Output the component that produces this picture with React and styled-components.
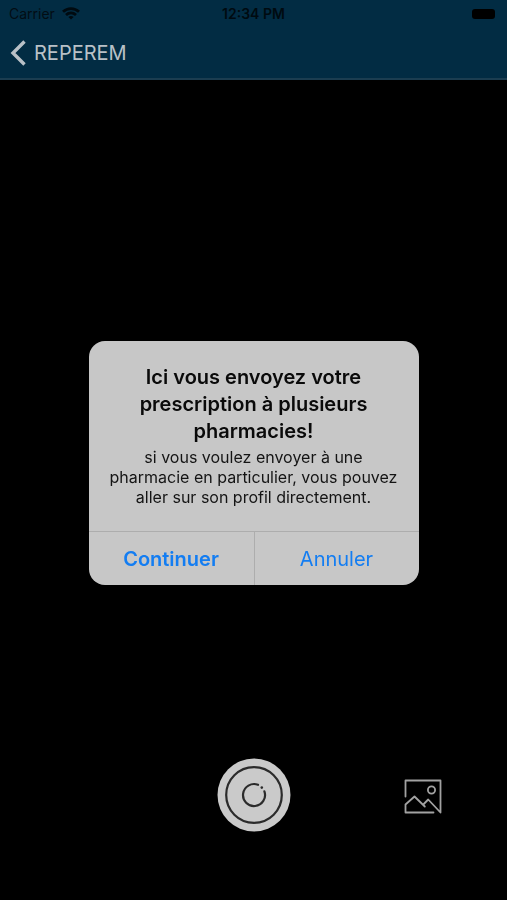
import React from "react";
import styled, { createGlobalStyle } from "styled-components";

const GlobalStyle = createGlobalStyle`
  * { box-sizing: border-box; }
  body {
    margin: 0;
    background: #000;
    font-family: Inter, "Liberation Sans", sans-serif;
  }
  button { font-family: inherit; border: 0; padding: 0; background: none; cursor: pointer; }
  svg { display: block; }
`;

const Screen = styled.div`
  min-height: 100vh;
  display: flex;
  flex-direction: column;
  background: #000;
`;

const Header = styled.header`
  background: #022c43;
  border-bottom: 2px solid #1b3d50;
`;

const StatusBar = styled.div`
  display: grid;
  grid-template-columns: 1fr auto 1fr;
  align-items: center;
  height: 27px;
  padding: 0 9px;
  color: #000a10;
  font-size: 14px;
`;

const Carrier = styled.span`
  display: flex;
  align-items: center;
  gap: 7px;
  color: #020d14;
`;

const Clock = styled.time`
  font-weight: 600;
`;

const Battery = styled.span`
  justify-self: end;
  width: 23px;
  height: 10px;
  margin-right: 3px;
  border-radius: 3px;
  background: #000;
`;

const NavBar = styled.nav`
  display: flex;
  align-items: center;
  height: 51px;
  padding: 0 10px;
`;

const BackLink = styled.a`
  display: flex;
  align-items: center;
  gap: 8px;
  color: #b9c1c7;
  font-size: 20px;
  text-decoration: none;
`;

const Viewfinder = styled.main`
  flex: 1;
`;

const CameraBar = styled.footer`
  display: grid;
  grid-template-columns: repeat(3, 1fr);
  align-items: center;
  justify-items: center;
  padding-bottom: 68px;
`;

const ShutterButton = styled.button`
  grid-column: 2;
  border-radius: 50%;
`;

const GalleryButton = styled.button`
  grid-column: 3;
  padding-top: 4px;
`;

const Overlay = styled.div`
  position: fixed;
  inset: 0;
  display: flex;
  align-items: center;
  justify-content: center;
  padding: 26px 16px 0;
  pointer-events: none;
`;

const Dialog = styled.section`
  width: 100%;
  max-width: 330px;
  border-radius: 16px;
  overflow: hidden;
  background: #c7c7c7;
  text-align: center;
  pointer-events: auto;
`;

const DialogBody = styled.div`
  padding: 23px 20px 24px;
`;

const DialogTitle = styled.h1`
  margin: 0;
  color: #0a0a0a;
  font-size: 20px;
  font-weight: 600;
  line-height: 27px;
`;

const DialogText = styled.p`
  margin: 2px 0 0;
  color: #141414;
  font-size: 16px;
  line-height: 20px;
`;

const DialogActions = styled.div`
  display: grid;
  grid-template-columns: 1fr 1fr;
  border-top: 1px solid #adadad;
`;

const DialogButton = styled.button`
  height: 53px;
  color: #137df2;
  font-size: 20px;
  font-weight: ${(p) => (p.$strong ? 600 : 400)};

  & + & { border-left: 1px solid #adadad; }
`;

function WifiIcon() {
  return (
    <svg width="18" height="13" viewBox="0 0 18 13" fill="none" stroke="#000a10" strokeWidth="2.8" aria-hidden="true">
      <path d="M1 4.8C5.6.5 12.4.5 17 4.8" />
      <path d="M4 8C7 5.3 11 5.3 14 8" />
      <path d="M9 12.6 6.4 10C7.8 8.8 10.2 8.8 11.6 10Z" fill="#000a10" stroke="none" />
    </svg>
  );
}

function BackIcon() {
  return (
    <svg width="16" height="26" viewBox="0 0 16 26" fill="none" stroke="#b9c1c7" strokeWidth="3.4" aria-hidden="true">
      <path d="M14.5 1.5 3 13 14.5 24.5" />
    </svg>
  );
}

function ShutterIcon() {
  return (
    <svg width="74" height="74" viewBox="0 0 74 74" fill="none" stroke="#2b2b2b" strokeWidth="2.2" aria-hidden="true">
      <circle cx="37" cy="37" r="36.5" fill="#cacaca" stroke="none" />
      <circle cx="37" cy="37" r="27.8" />
      <path d="M41 26.8A11 11 0 1 0 47.4 33.4" strokeLinecap="round" />
      <circle cx="44.8" cy="29.6" r="1.3" fill="#2b2b2b" stroke="none" />
    </svg>
  );
}

function GalleryIcon() {
  return (
    <svg width="38" height="36" viewBox="0 0 38 36" fill="none" stroke="#a2a2a2" strokeWidth="1.8" strokeLinejoin="round" strokeLinecap="round" aria-hidden="true">
      <path d="M1.5 17.5V1.5H36.5V33.5L24.2 20.5 19.8 25" />
      <path d="M29.5 33.5H1.5V25.5L10.5 17.5 20.8 27.5" />
      <circle cx="27.5" cy="11" r="3.6" />
    </svg>
  );
}

export default function App() {
  return (
    <Screen>
      <GlobalStyle />
      <Header>
        <StatusBar>
          <Carrier>
            Carrier <WifiIcon />
          </Carrier>
          <Clock>12:34 PM</Clock>
          <Battery role="img" aria-label="Batterie pleine" />
        </StatusBar>
        <NavBar>
          <BackLink href="#">
            <BackIcon />
            REPEREM
          </BackLink>
        </NavBar>
      </Header>
      <Viewfinder />
      <CameraBar>
        <ShutterButton type="button" aria-label="Prendre une photo">
          <ShutterIcon />
        </ShutterButton>
        <GalleryButton type="button" aria-label="Galerie">
          <GalleryIcon />
        </GalleryButton>
      </CameraBar>
      <Overlay>
        <Dialog role="alertdialog" aria-labelledby="dialog-title" aria-describedby="dialog-text">
          <DialogBody>
            <DialogTitle id="dialog-title">
              Ici vous envoyez votre prescription à plusieurs pharmacies!
            </DialogTitle>
            <DialogText id="dialog-text">
              si vous voulez envoyer à une pharmacie en particulier, vous pouvez aller sur son profil directement.
            </DialogText>
          </DialogBody>
          <DialogActions>
            <DialogButton type="button" $strong>
              Continuer
            </DialogButton>
            <DialogButton type="button">Annuler</DialogButton>
          </DialogActions>
        </Dialog>
      </Overlay>
    </Screen>
  );
}
